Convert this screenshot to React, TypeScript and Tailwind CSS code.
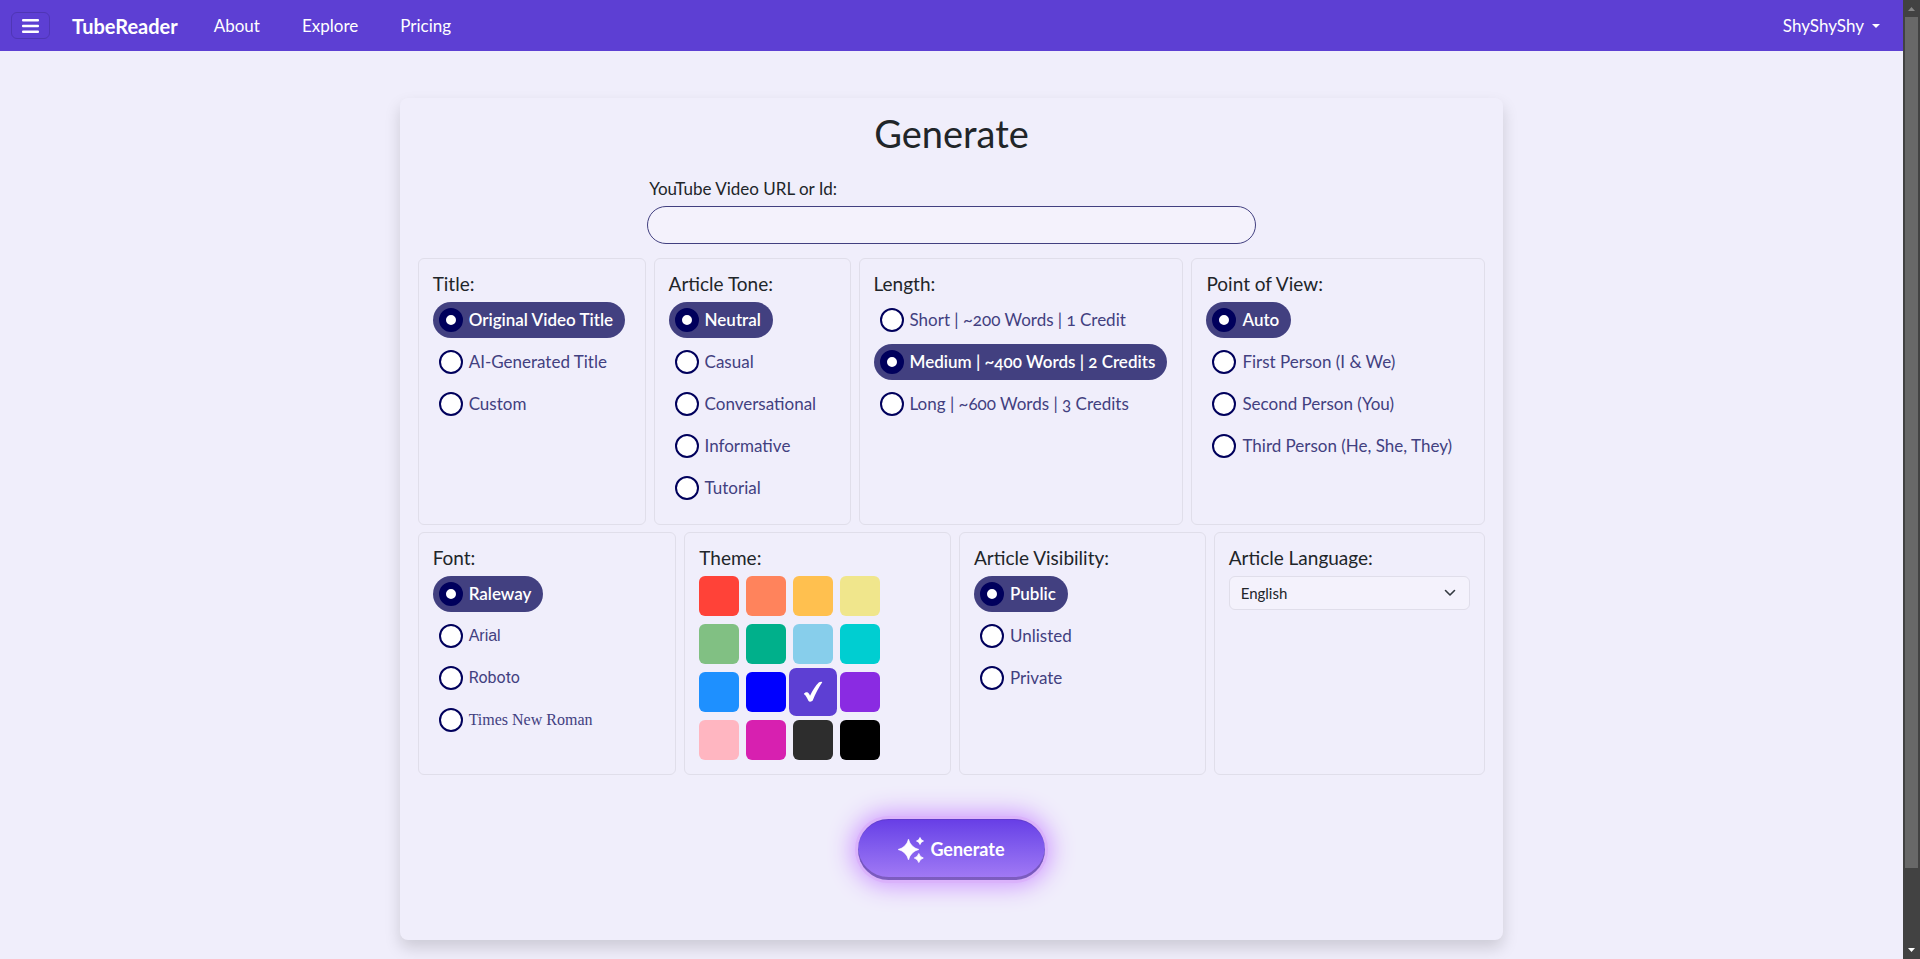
import { useState, type ReactNode } from "react";

type Option = { label: string; className?: string };

function Panel({ title, children }: { title: string; children: ReactNode }) {
  return (
    <fieldset className="min-w-0 rounded-md border border-[#e0deea] px-[14px] pb-[14px]">
      <legend className="float-left mt-[10px] w-full text-[19px] leading-[30px] text-[#212529]">{title}</legend>
      <div className="clear-both pt-[3px]">{children}</div>
    </fieldset>
  );
}

function RadioGroup({ name, options, initial = 0 }: { name: string; options: Option[]; initial?: number }) {
  const [selected, setSelected] = useState(initial);
  return (
    <div className="flex flex-col items-start gap-[6px]">
      {options.map((option, i) => (
        <label
          key={option.label}
          className={
            "flex h-9 cursor-pointer items-center gap-[6px] rounded-full pl-[6px] pr-3 whitespace-nowrap oldstyle-nums " +
            (option.className ?? "") +
            (i === selected ? " bg-[#424080] font-semibold text-white" : " text-[#424080]")
          }
        >
          <input
            type="radio"
            name={name}
            checked={i === selected}
            onChange={() => setSelected(i)}
            className="size-6 shrink-0 appearance-none rounded-full border-2 border-[#00005c] bg-white checked:border-[7px]"
          />
          <span>{option.label}</span>
        </label>
      ))}
    </div>
  );
}

const swatches = [
  { name: "Red", color: "bg-[#ff4238]" },
  { name: "Coral", color: "bg-[#ff835c]" },
  { name: "Amber", color: "bg-[#ffc04f]" },
  { name: "Khaki", color: "bg-[#f0e68c]" },
  { name: "Green", color: "bg-[#81c083]" },
  { name: "Jade", color: "bg-[#00b08b]" },
  { name: "Sky", color: "bg-[#87ceeb]" },
  { name: "Turquoise", color: "bg-[#00ced1]" },
  { name: "Azure", color: "bg-[#1e90ff]" },
  { name: "Blue", color: "bg-[#0000ff]" },
  { name: "Indigo", color: "bg-[#5d3fd3]" },
  { name: "Violet", color: "bg-[#8a2be2]" },
  { name: "Pink", color: "bg-[#ffb6c1]" },
  { name: "Magenta", color: "bg-[#d720b0]" },
  { name: "Charcoal", color: "bg-[#2d2d2d]" },
  { name: "Black", color: "bg-black" },
];

function ThemePicker() {
  const [selected, setSelected] = useState(10);
  return (
    <div className="grid w-fit grid-cols-4 gap-x-[7px] gap-y-2">
      {swatches.map((swatch, i) => (
        <button
          key={swatch.name}
          type="button"
          aria-label={swatch.name}
          aria-pressed={i === selected}
          onClick={() => setSelected(i)}
          className={
            "flex size-10 items-center justify-center rounded-md " +
            swatch.color +
            (i === selected ? " scale-120" : "")
          }
        >
          {i === selected && (
            <svg viewBox="0 0 20 22" className="h-[18px] w-4" fill="#fff" aria-hidden="true">
              <path d="M.4 13.2C1.4 11.400 3.200 10.800 4.600 11.600 5.500 12.200 6.200 13.400 6.900 14.800 9.600 9.400 12.800 3.800 16 1 17 .2 18.900 0 19.800.6 16 6 12.400 13 9.800 19.600 8.800 21.400 6 21.600 5.200 20.200 3.800 17.600 2.800 14.800.4 13.200Z" />
            </svg>
          )}
        </button>
      ))}
    </div>
  );
}

function NavBar() {
  return (
    <header className="flex h-[51px] items-center bg-[#5d3fd3] pr-[23px] pl-[11px] text-[17px] text-white">
      <button
        type="button"
        aria-label="Menu"
        className="flex h-[27px] w-[39px] items-center justify-center rounded-md border border-[#4f36b5]"
      >
        <svg viewBox="0 0 17 14" className="h-[14px] w-[17px]" fill="#fff" aria-hidden="true">
          <rect width="17" height="2.4" rx="1" />
          <rect y="5.8" width="17" height="2.4" rx="1" />
          <rect y="11.6" width="17" height="2.4" rx="1" />
        </svg>
      </button>
      <a href="#" className="ml-[22px] text-[20px] font-bold">
        TubeReader
      </a>
      <nav className="ml-9 flex gap-[42px]">
        <a href="#about">About</a>
        <a href="#explore">Explore</a>
        <a href="#pricing">Pricing</a>
      </nav>
      <button type="button" className="ml-auto flex items-center gap-2">
        ShyShyShy
        <svg viewBox="0 0 8 4" className="h-1 w-2" fill="#fff" aria-hidden="true">
          <path d="M0 0h8L4 4z" />
        </svg>
      </button>
    </header>
  );
}

function ScrollBar() {
  return (
    <div aria-hidden="true" className="flex w-[17px] shrink-0 flex-col items-center bg-[#424242]">
      <svg viewBox="0 0 17 17" className="size-[17px]" fill="#868686">
        <path d="M5 11h7L8.500 7z" />
      </svg>
      <div className="w-[13px] grow-[851] bg-[#686868]" />
      <div className="grow-[74]" />
      <svg viewBox="0 0 17 17" className="size-[17px]" fill="#fff">
        <path d="M5 6h7L8.500 10z" />
      </svg>
    </div>
  );
}

export default function App() {
  return (
    <div className="flex h-screen overflow-hidden bg-[#f0eefb] font-[Lato,'Noto_Sans',sans-serif] text-[17px] text-[#212529]">
      <div className="min-w-0 flex-1">
        <NavBar />
        <main className="mx-auto mt-[47px] w-[58%] rounded-lg bg-[#f0eefb] px-[18px] pb-[60px] shadow-[0_8px_16px_rgba(0,0,0,0.15)]">
          <form onSubmit={(e) => e.preventDefault()}>
            <h1 className="pt-[11px] text-center text-[38px] leading-[48px]">Generate</h1>
            <div className="mx-auto mt-5 w-[57%]">
              <label htmlFor="video" className="block pl-[2px] leading-6">
                YouTube Video URL or Id:
              </label>
              <input
                id="video"
                type="text"
                className="mt-[5px] block h-[38px] w-full rounded-full border border-[#424080] bg-[#f4f2fc] px-4 outline-none"
              />
            </div>
            <div className="mt-[14px] grid grid-cols-[228fr_197fr_325fr_294fr] gap-2">
              <Panel title="Title:">
                <RadioGroup
                  name="title"
                  options={[{ label: "Original Video Title" }, { label: "AI-Generated Title" }, { label: "Custom" }]}
                />
              </Panel>
              <Panel title="Article Tone:">
                <div className="pb-1">
                  <RadioGroup
                    name="tone"
                    options={[
                      { label: "Neutral" },
                      { label: "Casual" },
                      { label: "Conversational" },
                      { label: "Informative" },
                      { label: "Tutorial" },
                    ]}
                  />
                </div>
              </Panel>
              <Panel title="Length:">
                <RadioGroup
                  name="length"
                  initial={1}
                  options={[
                    { label: "Short | ~200 Words | 1 Credit" },
                    { label: "Medium | ~400 Words | 2 Credits" },
                    { label: "Long | ~600 Words | 3 Credits" },
                  ]}
                />
              </Panel>
              <Panel title="Point of View:">
                <RadioGroup
                  name="pov"
                  options={[
                    { label: "Auto" },
                    { label: "First Person (I & We)" },
                    { label: "Second Person (You)" },
                    { label: "Third Person (He, She, They)" },
                  ]}
                />
              </Panel>
            </div>
            <div className="mt-[7px] grid grid-cols-[259fr_267fr_247fr_272fr] gap-2">
              <Panel title="Font:">
                <RadioGroup
                  name="font"
                  options={[
                    { label: "Raleway" },
                    { label: "Arial", className: "font-['Liberation_Sans',sans-serif] text-[16px]" },
                    { label: "Roboto", className: "font-[Roboto,sans-serif] text-[16px]" },
                    { label: "Times New Roman", className: "font-['Liberation_Serif',serif] text-[16px]" },
                  ]}
                />
              </Panel>
              <Panel title="Theme:">
                <ThemePicker />
              </Panel>
              <Panel title="Article Visibility:">
                <RadioGroup
                  name="visibility"
                  options={[{ label: "Public" }, { label: "Unlisted" }, { label: "Private" }]}
                />
              </Panel>
              <Panel title="Article Language:">
                <div className="grid items-center">
                  <select
                    aria-label="Article Language"
                    className="col-start-1 row-start-1 h-[34px] w-full appearance-none rounded-md border border-[#e0deea] bg-[#f4f2fc] px-[11px] text-[15px] outline-none"
                  >
                    <option>English</option>
                  </select>
                  <svg
                    viewBox="0 0 12 12"
                    className="pointer-events-none col-start-1 row-start-1 mr-[14px] size-3 justify-self-end"
                    fill="none"
                    stroke="#343a40"
                    strokeWidth="1.6"
                    strokeLinecap="round"
                    strokeLinejoin="round"
                    aria-hidden="true"
                  >
                    <path d="M1.500 3.500 6 8l4.500-4.500" />
                  </svg>
                </div>
              </Panel>
            </div>
            <button
              type="submit"
              className="mx-auto mt-11 flex h-[61px] w-[187px] items-center justify-center gap-[6px] rounded-full bg-linear-to-b from-[#673de6] to-[#a47bf5] text-[18px] font-bold text-white shadow-[inset_0_-3px_0_rgba(70,50,110,0.4),inset_0_1px_0_rgba(70,50,110,0.2),0_0_0_3px_#dab2fb,0_0_24px_6px_#cd96ff]"
            >
              <svg viewBox="0 0 26 26" className="size-[26px]" fill="#fff" aria-hidden="true">
                <path d="M10.500 2Q12.600 10.200 21 12.500 12.600 14.800 10.500 23 8.400 14.800 0 12.500 8.400 10.200 10.500 2Z" stroke="#fff" strokeWidth=".5" />
                <path d="M22 .5Q22.800 3.200 25.500 4 22.800 4.800 22 7.500 21.200 4.800 18.500 4 21.200 3.200 22 .5Z" stroke="#fff" strokeWidth=".8" />
                <path d="M20.800 16.500Q21.800 20 25.300 21 21.800 22 20.800 25.500 19.800 22 16.300 21 19.800 20 20.800 16.500Z" stroke="#fff" strokeWidth=".8" />
              </svg>
              Generate
            </button>
          </form>
        </main>
      </div>
      <ScrollBar />
    </div>
  );
}
